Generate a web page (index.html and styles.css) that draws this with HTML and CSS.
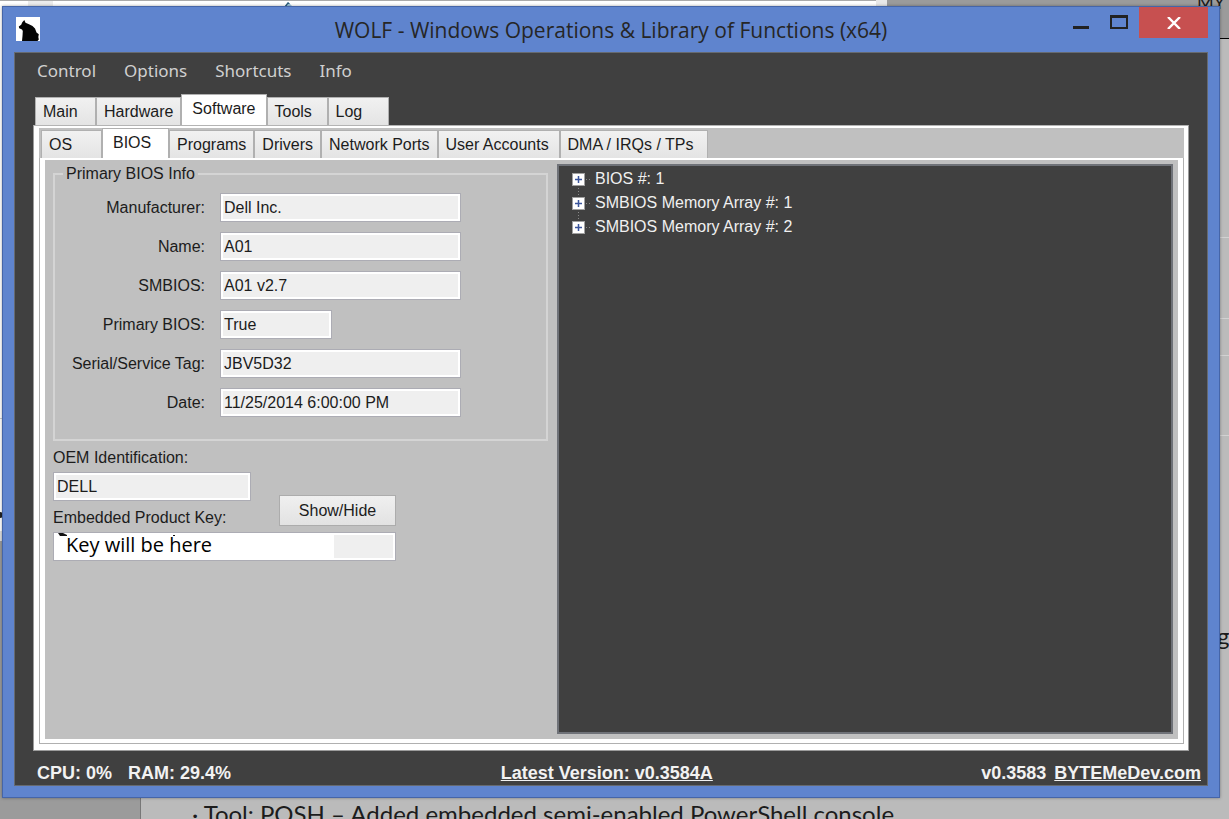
FILE: index.html
```html
<!DOCTYPE html>
<html lang="en">
<head>
<meta charset="utf-8">
<title>WOLF - Windows Operations &amp; Library of Functions (x64)</title>
<link rel="stylesheet" href="styles.css">
</head>
<body>
<div class="backdrop" aria-hidden="true">
  <div class="page-top"></div>
  <svg class="page-caret" width="10" height="5" viewBox="0 0 10 5"><path d="M0 5 4 0 9 5z" fill="#9fc6dc"/><path d="M0 5 4 0 6 2 4 2 2 5z" fill="#2c5a78"/></svg>
  <div class="page-nav">MY D</div>
  <div class="page-left"></div>
  <span class="page-dot"></span>
  <div class="page-sheet"></div>
  <div class="rule rule-a"></div>
  <div class="rule rule-b"></div>
  <div class="rule rule-c"></div>
  <div class="rule rule-d"></div>
  <span class="page-letter">g</span>
  <p class="page-note">· Tool: POSH – Added embedded semi-enabled PowerShell console</p>
</div>

<div class="window">
  <header class="titlebar">
    <svg class="logo" width="24" height="24" viewBox="0 0 24 24"><rect width="24" height="24" fill="#fff"/><path d="M6 24 6.500 19 6.800 14 6 12.500 3.200 11.300 2.800 9.500 5.200 7.800 6.300 5.200 8.300 3 9.500 5.800 13 7.200 16.500 9 19 11.500 20.500 15.500 22.800 17.200 22.300 20 22.800 22.500 21.500 24z" fill="#050505"/></svg>
    <h1>WOLF - Windows Operations &amp; Library of Functions (x64)</h1>
    <div class="caption-buttons">
      <button class="cap" aria-label="Minimize"><svg width="16" height="16"><path d="M0 11h16v3H0z" fill="#222"/></svg></button>
      <button class="cap" aria-label="Maximize"><svg width="18" height="16"><path d="M1 0v13h16V0" fill="none" stroke="#222" stroke-width="2"/><path d="M0 0h18v3H0z" fill="#222"/></svg></button>
      <button class="cap close" aria-label="Close"><svg width="14" height="12" viewBox="0 0 14 12"><path d="M1 0 13 12M13 0 1 12" stroke="#fff" stroke-width="2.400"/></svg></button>
    </div>
  </header>

  <main class="client">
    <nav class="menu">
      <button>Control</button><button>Options</button><button>Shortcuts</button><button>Info</button>
    </nav>

    <div class="tabs outer-tabs" role="tablist">
      <button role="tab">Main</button><button role="tab">Hardware</button><button role="tab" class="active" aria-selected="true">Software</button><button role="tab">Tools</button><button role="tab">Log</button>
    </div>

    <section class="outer-panel">
      <div class="inner-area">
        <div class="tabs inner-tabs" role="tablist">
          <button role="tab">OS</button><button role="tab" class="active" aria-selected="true">BIOS</button><button role="tab">Programs</button><button role="tab">Drivers</button><button role="tab">Network Ports</button><button role="tab" class="wide">User Accounts</button><button role="tab" class="widest">DMA / IRQs / TPs</button>
        </div>
        <div class="inner-panel">
          <div class="content">
            <form class="form">
              <fieldset>
                <legend>Primary BIOS Info</legend>
                <div class="fields">
                  <label for="manufacturer">Manufacturer:</label><input id="manufacturer" value="Dell Inc." readonly>
                  <label for="name">Name:</label><input id="name" value="A01" readonly>
                  <label for="smbios">SMBIOS:</label><input id="smbios" value="A01 v2.7" readonly>
                  <label for="primary">Primary BIOS:</label><input id="primary" class="short" value="True" readonly>
                  <label for="serial">Serial/Service Tag:</label><input id="serial" value="JBV5D32" readonly>
                  <label for="date">Date:</label><input id="date" value="11/25/2014 6:00:00 PM" readonly>
                </div>
              </fieldset>
              <div class="oem">
                <label for="oem">OEM Identification:</label>
                <input id="oem" value="DELL" readonly>
              </div>
              <div class="key">
                <div class="key-head">
                  <label for="key">Embedded Product Key:</label>
                  <button type="button" class="push">Show/Hide</button>
                </div>
                <div class="key-box">
                  <input id="key" value="Key will be here" readonly>
                  <svg class="key-mark" width="120" height="4" viewBox="0 0 120 4"><path d="M0 0h5l4 2v1H2z M115 2h2v1h-2z" fill="#111"/></svg>
                </div>
              </div>
            </form>
            <ul class="tree">
              <li><button aria-label="Expand"><svg width="22" height="24"><path d="M6.500 18v6M14 12.500h6" stroke="#888" stroke-dasharray="1 2"/><rect x=".5" y="6.500" width="12" height="12" fill="#fff" stroke="#a0a0a0"/><path d="M3 12.500h7M6.500 9v7" stroke="#3a549c" stroke-width="1.500"/></svg></button>BIOS #: 1</li>
              <li><button aria-label="Expand"><svg width="22" height="24"><path d="M6.500 0v6M6.500 18v6M14 12.500h6" stroke="#888" stroke-dasharray="1 2"/><rect x=".5" y="6.500" width="12" height="12" fill="#fff" stroke="#a0a0a0"/><path d="M3 12.500h7M6.500 9v7" stroke="#3a549c" stroke-width="1.500"/></svg></button>SMBIOS Memory Array #: 1</li>
              <li><button aria-label="Expand"><svg width="22" height="24"><path d="M6.500 0v6M14 12.500h6" stroke="#888" stroke-dasharray="1 2"/><rect x=".5" y="6.500" width="12" height="12" fill="#fff" stroke="#a0a0a0"/><path d="M3 12.500h7M6.500 9v7" stroke="#3a549c" stroke-width="1.500"/></svg></button>SMBIOS Memory Array #: 2</li>
            </ul>
          </div>
        </div>
      </div>
    </section>

    <footer class="status">
      <div class="status-left"><span>CPU: 0%</span><span>RAM: 29.4%</span></div>
      <a href="#latest">Latest Version: v0.3584A</a>
      <div class="status-right"><span>v0.3583</span><a href="#site">BYTEMeDev.com</a></div>
    </footer>
  </main>
</div>
</body>
</html>
```
FILE: styles.css
```css
* { box-sizing: border-box; }
body {
  margin: 0;
  min-height: 100vh;
  display: flex;
  overflow: hidden;
  background: #bbb;
  color: #1c1c1c;
  font: 16px/20px "Liberation Sans", Arial, sans-serif;
}
button, input { font: inherit; color: inherit; margin: 0; }
button { border: 0; background: none; padding: 0; }

/* Page behind the window */
.backdrop { position: absolute; inset: 0; overflow: hidden; font-family: Lato, sans-serif; }
.backdrop > * { position: absolute; }
.page-top {
  inset: 0 0 auto 0;
  height: 39px;
  border-bottom: 1px solid #000;
  background: linear-gradient(90deg, #fff 28px, #ececec 28px 53px, #fff 53px 876px, #e8e8e8 876px 887px, #9b9b9b 887px);
}
.page-top::before { content: ""; display: block; width: 876px; height: 1px; background: #aaa; }
.page-caret { left: 284px; top: 2px; }
.page-nav { left: 1197px; top: -8px; font-size: 18px; line-height: 20px; white-space: nowrap; }
.page-left {
  left: 0; top: 38px; bottom: 0; width: 140px;
  background: linear-gradient(#fff 380px, #ccc 380px 381px, #fff 381px 493px, #ddd 493px 503px, #9b9b9b 503px);
}
.page-dot { left: -3px; top: 512px; width: 6px; height: 6px; border-radius: 50%; background: #222; }
.page-sheet { left: 140px; right: 0; top: 39px; bottom: 0; border-left: 1px solid #777; background: #bbb; }
.rule { right: 0; width: 20px; height: 1px; background: #d2d2d2; }
.rule-a { top: 237px; }
.rule-b { top: 318px; }
.rule-c { top: 355px; }
.rule-d { top: 435px; }
.page-letter { left: 1217px; top: 622px; font-size: 24px; line-height: 28px; }
.page-note { left: 192px; top: 800px; margin: 0; font-size: 24px; line-height: 28px; white-space: nowrap; }

/* Window frame */
.window {
  position: relative;
  flex: 1;
  margin: 6px 9px 21px 2px;
  padding: 0 11px 11px;
  border: 1px solid #4565a8;
  background: #5f84ce;
  box-shadow: 0 0 3px rgba(0, 0, 0, .35);
  display: flex;
  flex-direction: column;
}
.titlebar { height: 45px; display: grid; grid-template-columns: 146px 1fr 146px; }
.logo { margin: 10px 0 0 2px; }
h1 {
  margin: 0;
  padding-top: 8px;
  text-align: center;
  font: 400 21px/30px "Open Sans", sans-serif;
  color: #262626;
  white-space: nowrap;
}
.caption-buttons { display: grid; grid-template-columns: 37px 40px 69px; height: 31px; }
.cap { display: flex; justify-content: center; align-items: center; }
.cap.close { background: #c75050; }

.client {
  flex: 1;
  border: 1px solid #666a70;
  background: #404040;
  padding: 0 18px;
  display: flex;
  flex-direction: column;
}
.menu { display: flex; gap: 28px; padding: 6px 4px 0; height: 41px; font: 17px/24px "Noto Sans", sans-serif; color: #d0d0d0; }
.menu button { height: 24px; }

/* Tabs */
.tabs { display: flex; align-items: flex-end; padding-left: 2px; }
.tabs button {
  min-width: 61px;
  height: 28px;
  padding: 0 7px;
  border: 1px solid #b0b0b0;
  border-bottom-width: 0;
  background: linear-gradient(#f1f1f1, #e4e4e4);
  text-align: left;
  white-space: nowrap;
}
.tabs .active { height: 31px; padding: 0 10px 2px; background: #fff; }
.outer-tabs .active { min-width: 85px; }
.inner-tabs .active { min-width: 67px; height: 30px; }
.inner-tabs .wide { min-width: 122px; }
.inner-tabs .widest { min-width: 148px; }
.inner-tabs { height: 30px; }

.outer-panel {
  flex: 1;
  border: 1px solid #9c9c9c;
  border-top-color: #b4b4b4;
  background: #fff;
  padding: 2px 4px 6px 5px;
  display: flex;
}
.inner-area { flex: 1; background: #c0c0c0; display: flex; flex-direction: column; }
.inner-panel { flex: 1; display: flex; border: 1px solid #b0b0b0; border-top-width: 0; background: #fff; padding: 2px 5px 4px; }
.content {
  flex: 1;
  display: grid;
  grid-template-columns: 504px 1fr;
  padding: 4px 5px 5px 8px;
  background: #c0c0c0;
}

/* Form */
.form { padding-right: 9px; }
fieldset { margin: 0; height: 277px; padding: 9px 8px 0; border: 2px solid #d4d4d4; }
legend { padding: 0 3px; line-height: 20px; }
.fields { display: grid; grid-template-columns: 142px 241px; grid-auto-rows: 29px; gap: 10px 15px; align-items: center; }
.fields label { text-align: right; white-space: nowrap; }
input {
  width: 100%;
  height: 29px;
  padding: 0 3px;
  border: 1px solid #acacb4;
  box-shadow: inset 0 0 0 2px #fff;
  background: #efefef;
  outline: 0;
}
.fields .short { width: 112px; }
.oem { padding-top: 7px; }
.oem label { display: block; height: 24px; }
.oem input { width: 198px; display: block; }
.key { width: 343px; }
.key-head { display: flex; justify-content: space-between; height: 31px; align-items: flex-end; }
.key-head label { padding-bottom: 4px; }
.push { width: 117px; height: 31px; margin-bottom: 6px; border: 1px solid #acacac; background: linear-gradient(#f0f0f0, #e2e2e2); }
.key-box { position: relative; }
.key-box input {
  padding: 0 12px 4px;
  font: 20px/24px "Open Sans", sans-serif;
  color: #000;
  background: linear-gradient(90deg, #fff 280px, #efefef 280px);
}
.key-mark { position: absolute; left: 5px; top: 1px; }

/* Tree */
.tree { margin: 0; padding: 1px 13px; list-style: none; border: 2px solid #6f7278; background: #404040; color: #f0f0f0; }
.tree li { display: flex; align-items: center; height: 24px; white-space: nowrap; }
.tree button { height: 24px; margin-right: 1px; }
.tree svg { display: block; }

/* Status bar */
.status {
  display: grid;
  grid-template-columns: 19fr auto 20fr;
  height: 34px;
  margin: 0 -12px 0 4px;
  padding-top: 12px;
  font-size: 18px;
  font-weight: 700;
  color: #f2f2f2;
}
.status-left { display: flex; gap: 16px; }
.status-right { display: flex; justify-content: flex-end; gap: 8px; }
.status a { color: inherit; }
```
